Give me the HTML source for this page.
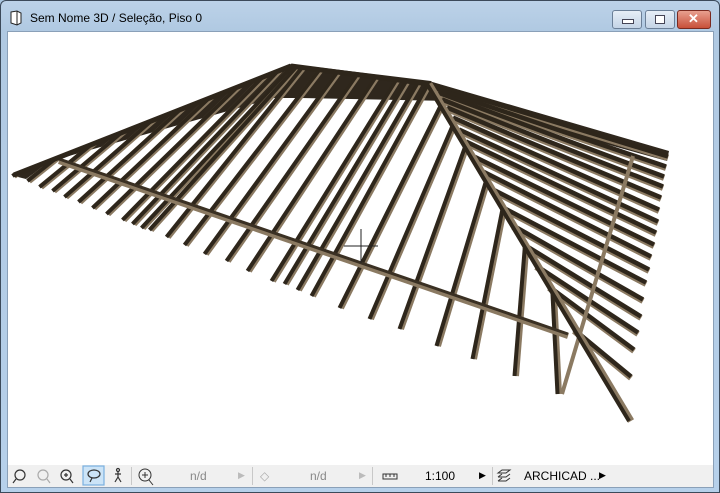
<!DOCTYPE html>
<html><head><meta charset="utf-8"><style>
body{margin:0;width:720px;height:493px;overflow:hidden;background:#aac6e0;font-family:"Liberation Sans",sans-serif;position:relative}
.frame{position:absolute;left:0;top:0;width:718px;height:491px;border:1px solid #3c4a5a;border-radius:6px 6px 0 0;background:linear-gradient(#bcd2e8,#b0c9e2 30px,#b6d0ea)}
.title{position:absolute;left:30px;top:11px;font-size:12px;color:#000}
.content{position:absolute;left:7px;top:31px;width:705px;height:434px;background:#fff;border:1px solid #8aa0b8}
.bar{position:absolute;left:7px;top:465px;width:705px;height:22px;background:#f0f0f0;border:1px solid #8aa0b8;border-top:none;font-size:12px;color:#000}
.btn{position:absolute;top:10px;height:17px;border:1px solid #6b7f97;border-radius:3px;background:linear-gradient(#e6eef7,#c4d4e6)}
.sep{position:absolute;top:2px;width:1px;height:18px;background:#c8c8c8}
.t{position:absolute;top:4px}
</style></head><body>
<div class="frame"></div>
<svg style="position:absolute;left:9px;top:10px" width="14" height="16"><path d="M2 2 L8 1 L12 3 L12 13 L8 15 L2 13 Z" fill="#fff" stroke="#222"/><path d="M8 1 L8 15" stroke="#222"/></svg>
<div class="title">Sem Nome 3D / Seleção, Piso 0</div>
<div class="btn" style="left:612px;width:28px"><div style="position:absolute;left:9px;top:8px;width:10px;height:3px;background:#fff;border:1px solid #445"></div></div>
<div class="btn" style="left:645px;width:28px"><div style="position:absolute;left:9px;top:4px;width:8px;height:7px;border:1px solid #445;background:#fff"></div></div>
<div class="btn" style="left:677px;width:32px;background:linear-gradient(#e8a090,#c8503a);border-color:#7a2a20"><div style="position:absolute;left:10px;top:0;color:#fff;font-weight:bold;font-size:13px">✕</div></div>
<div class="content">
<svg width="705" height="434" viewBox="7 31 705 434">
<defs>
<clipPath id="cf"><polygon points="0,175 13,172 290,64 428,82 573,330 630,420 630,440 0,440"/></clipPath>
</defs>
<polygon points="13,175 290,63 430,80 450,100 300,97 273,97 50,160 25,178" fill="#2f271d"/>
<polygon points="428,80 668,150 666,160 450,100" fill="#2f271d"/>
<g stroke="#8b7a62" stroke-width="6">
<line x1="428" y1="84" x2="667" y2="157"/><line x1="432" y1="88" x2="665" y2="167"/><line x1="437" y1="93" x2="663" y2="177"/><line x1="441" y1="100" x2="662" y2="187"/><line x1="446" y1="108" x2="660" y2="198"/><line x1="452" y1="118" x2="658" y2="210"/><line x1="458" y1="130" x2="657" y2="222"/><line x1="465" y1="142" x2="655" y2="233"/><line x1="473" y1="157" x2="653" y2="245"/><line x1="482" y1="172" x2="650" y2="257"/><line x1="492" y1="190" x2="648" y2="270"/><line x1="502" y1="208" x2="645" y2="283"/><line x1="512" y1="226" x2="642" y2="300"/><line x1="523" y1="245" x2="640" y2="317"/><line x1="535" y1="266" x2="637" y2="333"/><line x1="548" y1="287" x2="633" y2="350"/><line x1="573" y1="330" x2="630" y2="377"/>
</g>
<g stroke="#2e261b" stroke-width="4.5" transform="translate(0,-1.5)">
<line x1="428" y1="84" x2="667" y2="157"/><line x1="432" y1="88" x2="665" y2="167"/><line x1="437" y1="93" x2="663" y2="177"/><line x1="441" y1="100" x2="662" y2="187"/><line x1="446" y1="108" x2="660" y2="198"/><line x1="452" y1="118" x2="658" y2="210"/><line x1="458" y1="130" x2="657" y2="222"/><line x1="465" y1="142" x2="655" y2="233"/><line x1="473" y1="157" x2="653" y2="245"/><line x1="482" y1="172" x2="650" y2="257"/><line x1="492" y1="190" x2="648" y2="270"/><line x1="502" y1="208" x2="645" y2="283"/><line x1="512" y1="226" x2="642" y2="300"/><line x1="523" y1="245" x2="640" y2="317"/><line x1="535" y1="266" x2="637" y2="333"/><line x1="548" y1="287" x2="633" y2="350"/><line x1="573" y1="330" x2="630" y2="377"/>
</g>
<line x1="632" y1="155" x2="561" y2="393" stroke="#8b7a62" stroke-width="4"/>
<g clip-path="url(#cf)">
<g stroke="#8b7a62" stroke-width="6">
<line x1="13" y1="175" x2="533" y2="-225"/><line x1="28" y1="180" x2="528" y2="-220"/><line x1="40" y1="186" x2="528" y2="-214"/><line x1="53" y1="190" x2="525" y2="-210"/><line x1="65" y1="196" x2="521" y2="-204"/><line x1="79" y1="201" x2="519" y2="-199"/><line x1="93" y1="207" x2="517" y2="-193"/><line x1="107" y1="213" x2="519" y2="-187"/><line x1="123" y1="219" x2="515" y2="-181"/><line x1="133" y1="223" x2="513" y2="-177"/><line x1="142" y1="227" x2="514" y2="-173"/><line x1="150" y1="229" x2="510" y2="-171"/><line x1="167" y1="236" x2="487" y2="-164"/><line x1="185" y1="244" x2="493" y2="-156"/><line x1="205" y1="253" x2="497" y2="-147"/><line x1="227" y1="260" x2="507" y2="-140"/><line x1="248" y1="270" x2="512" y2="-130"/><line x1="272" y1="280" x2="520" y2="-120"/><line x1="285" y1="283" x2="525" y2="-117"/><line x1="298" y1="289" x2="530" y2="-111"/><line x1="312" y1="295" x2="532" y2="-105"/><line x1="340" y1="307" x2="540" y2="-93"/><line x1="370" y1="318" x2="542" y2="-82"/><line x1="400" y1="328" x2="544" y2="-72"/><line x1="437" y1="345" x2="557" y2="-55"/><line x1="473" y1="358" x2="553" y2="-42"/><line x1="515" y1="375" x2="547" y2="-25"/><line x1="558" y1="393" x2="538" y2="-7"/>
</g>
<g stroke="#2e261b" stroke-width="4" transform="translate(-1.5,0)">
<line x1="13" y1="175" x2="533" y2="-225"/><line x1="28" y1="180" x2="528" y2="-220"/><line x1="40" y1="186" x2="528" y2="-214"/><line x1="53" y1="190" x2="525" y2="-210"/><line x1="65" y1="196" x2="521" y2="-204"/><line x1="79" y1="201" x2="519" y2="-199"/><line x1="93" y1="207" x2="517" y2="-193"/><line x1="107" y1="213" x2="519" y2="-187"/><line x1="123" y1="219" x2="515" y2="-181"/><line x1="133" y1="223" x2="513" y2="-177"/><line x1="142" y1="227" x2="514" y2="-173"/><line x1="150" y1="229" x2="510" y2="-171"/><line x1="167" y1="236" x2="487" y2="-164"/><line x1="185" y1="244" x2="493" y2="-156"/><line x1="205" y1="253" x2="497" y2="-147"/><line x1="227" y1="260" x2="507" y2="-140"/><line x1="248" y1="270" x2="512" y2="-130"/><line x1="272" y1="280" x2="520" y2="-120"/><line x1="285" y1="283" x2="525" y2="-117"/><line x1="298" y1="289" x2="530" y2="-111"/><line x1="312" y1="295" x2="532" y2="-105"/><line x1="340" y1="307" x2="540" y2="-93"/><line x1="370" y1="318" x2="542" y2="-82"/><line x1="400" y1="328" x2="544" y2="-72"/><line x1="437" y1="345" x2="557" y2="-55"/><line x1="473" y1="358" x2="553" y2="-42"/><line x1="515" y1="375" x2="547" y2="-25"/><line x1="558" y1="393" x2="538" y2="-7"/>
</g>
</g>
<line x1="58" y1="160" x2="567" y2="335" stroke="#8b7a62" stroke-width="6"/>
<line x1="58" y1="158" x2="567" y2="333" stroke="#3a3023" stroke-width="3"/>
<line x1="428" y1="83" x2="630" y2="420" stroke="#8b7a62" stroke-width="7"/>
<line x1="426" y1="83" x2="628" y2="420" stroke="#2e261b" stroke-width="4"/>
<line x1="290" y1="65" x2="13" y2="174" stroke="#2e261b" stroke-width="5"/>
<line x1="290" y1="65" x2="428" y2="83" stroke="#2e261b" stroke-width="5"/>
<path d="M360 228 V262 M343 245 H377" stroke="#222" stroke-width="1"/>
</svg>
</div>
<div class="bar">
<svg style="position:absolute;left:0;top:0" width="130" height="22" fill="none" stroke="#333" stroke-width="1.2">
<circle cx="12" cy="10" r="5"/><path d="M8 14 L5 18"/>
<g stroke="#aaa"><circle cx="35" cy="10" r="5"/><path d="M39 14 L42 18"/></g>
<circle cx="58" cy="10" r="5"/><path d="M62 14 L65 18 M56 10 H60 M58 8 V12"/>
<rect x="75" y="1" width="21" height="19" fill="#cce4f7" stroke="#7ab0e0"/>
<ellipse cx="86" cy="9" rx="6" ry="4"/><path d="M84 13 L82 17"/>
<circle cx="110" cy="5" r="1.5"/><path d="M110 7 L110 12 L107 17 M110 12 L113 17 M107 9 L113 9"/>
</svg>
<div class="sep" style="left:123px"></div>
<svg style="position:absolute;left:128px;top:2px" width="20" height="20" fill="none" stroke="#333"><circle cx="9" cy="8" r="6"/><path d="M13 13 L17 18 M6 8 H12 M9 5 V11"/></svg>
<div class="t" style="left:182px;color:#888">n/d</div>
<div class="t" style="left:230px;color:#bbb;font-size:9px;top:5px">▶</div>
<div class="sep" style="left:244px"></div>
<div class="t" style="left:252px;color:#aaa">◇</div>
<div class="t" style="left:302px;color:#888">n/d</div>
<div class="t" style="left:351px;color:#bbb;font-size:9px;top:5px">▶</div>
<div class="sep" style="left:364px"></div>
<svg style="position:absolute;left:374px;top:6px" width="16" height="10" fill="none" stroke="#333"><rect x="1" y="3" width="14" height="5"/><path d="M4 3V6 M8 3V6 M12 3V6"/></svg>
<div class="t" style="left:417px">1:100</div>
<div class="t" style="left:471px;font-size:9px;top:5px">▶</div>
<div class="sep" style="left:484px"></div>
<svg style="position:absolute;left:488px;top:3px" width="16" height="16" fill="none" stroke="#333"><path d="M2 5 L6 2 H14 L10 5 Z M2 9 L6 6 M14 6 L10 9 H2 M2 13 L6 10 M14 10 L10 13 H2"/></svg>
<div class="t" style="left:516px">ARCHICAD ...</div>
<div class="t" style="left:591px;font-size:9px;top:5px">▶</div>
</div>
</body></html>
